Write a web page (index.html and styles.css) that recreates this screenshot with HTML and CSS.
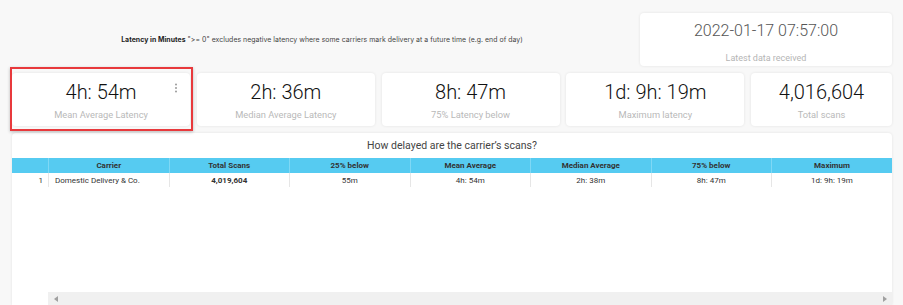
FILE: index.html
```html
<!DOCTYPE html>
<html lang="en">
<head>
    <meta charset="UTF-8">
    <meta name="viewport" content="width=device-width, initial-scale=1.0">
    <title>Carrier Latency</title>
    <link rel="stylesheet" href="styles.css">
</head>
<body>

    <div class="page">
        <!-- Header: note + latest data -->
        <div class="top">
            <p class="note"><b>Latency in Minutes</b> "&gt;= 0" excludes negative latency where some carriers mark delivery at a future time (e.g. end of day)</p>
            <div class="card latest">
                <div class="latest-value">2022-01-17 07:57:00</div>
                <div class="latest-label">Latest data received</div>
            </div>
        </div>

        <!-- KPI cards -->
        <div class="kpis">
            <div class="card kpi selected">
                <div class="kpi-value">4h: 54m</div>
                <div class="kpi-label">Mean Average Latency</div>
                <svg class="menu-dots" width="4" height="10" viewBox="0 0 4 10">
                    <circle cx="2" cy="1.5" r="1" />
                    <circle cx="2" cy="5" r="1" />
                    <circle cx="2" cy="8.5" r="1" />
                </svg>
            </div>
            <div class="card kpi">
                <div class="kpi-value">2h: 36m</div>
                <div class="kpi-label">Median Average Latency</div>
            </div>
            <div class="card kpi">
                <div class="kpi-value">8h: 47m</div>
                <div class="kpi-label">75% Latency below</div>
            </div>
            <div class="card kpi">
                <div class="kpi-value">1d: 9h: 19m</div>
                <div class="kpi-label">Maximum latency</div>
            </div>
            <div class="card kpi kpi-small">
                <div class="kpi-value">4,016,604</div>
                <div class="kpi-label">Total scans</div>
            </div>
        </div>

        <!-- Table -->
        <div class="card table-card">
            <div class="table-title">How delayed are the carrier’s scans?</div>
            <table>
                <thead>
                    <tr>
                        <th class="num"></th>
                        <th>Carrier</th>
                        <th>Total Scans</th>
                        <th>25% below</th>
                        <th>Mean Average</th>
                        <th>Median Average</th>
                        <th>75% below</th>
                        <th>Maximum</th>
                    </tr>
                </thead>
                <tbody>
                    <tr>
                        <td class="num">1</td>
                        <td class="left">Domestic Delivery &amp; Co.</td>
                        <td><b>4,019,604</b></td>
                        <td>55m</td>
                        <td>4h: 54m</td>
                        <td>2h: 38m</td>
                        <td>8h: 47m</td>
                        <td>1d: 9h: 19m</td>
                    </tr>
                </tbody>
            </table>
            <div class="scrollbar">
                <span class="arrow arrow-left"></span>
                <span class="arrow arrow-right"></span>
            </div>
        </div>
    </div>

</body>
</html>
```

FILE: styles.css
```css
body {
    margin: 0;
    background: #f8f8f8;
    font-family: Roboto, "Liberation Sans", Arial, sans-serif;
    color: #333;
    overflow: hidden;
}

.page {
    padding: 13px 11px 0 12px;
    height: 292px;
    display: flex;
    flex-direction: column;
}

.card {
    background: #fff;
    border-radius: 4px;
    box-shadow: 0 0 3px rgba(0, 0, 0, 0.09);
}

/* top row */
.top {
    display: flex;
    align-items: center;
    height: 53px;
}

.note {
    flex: 1;
    margin: 0 8px 0 0;
    text-align: center;
    font-family: Inter, "Open Sans", sans-serif;
    font-size: 6.9px;
    letter-spacing: 0.05px;
    color: #444;
}

.note b {
    color: #222;
}

.latest {
    width: 252px;
    height: 53px;
    display: flex;
    flex-direction: column;
    align-items: center;
}

.latest-value {
    margin-top: 8px;
    font-size: 16px;
    font-weight: 300;
    line-height: 20px;
    color: #555;
}

.latest-label {
    margin-top: 11px;
    font-size: 9px;
    line-height: 12px;
    color: #b5b5b5;
}

/* kpi cards */
.kpis {
    display: flex;
    gap: 6.6px;
    margin-top: 7px;
}

.kpi {
    position: relative;
    flex: 1;
    height: 53px;
    display: flex;
    flex-direction: column;
    align-items: center;
}

.kpi-small {
    flex: 0 0 141px;
}

.kpi-value {
    margin-top: 7px;
    font-size: 20px;
    font-weight: 300;
    line-height: 24px;
    color: #111;
}

.kpi-label {
    margin-top: 5px;
    font-size: 9.3px;
    line-height: 12px;
    color: #b9b9b9;
}

.selected::after {
    content: "";
    position: absolute;
    top: -6px;
    bottom: -5px;
    left: -2px;
    right: -3px;
    border: 2px solid #e8393c;
    box-shadow: 0 1px 3px rgba(0, 0, 0, 0.25);
}

.menu-dots {
    position: absolute;
    top: 10px;
    right: 12px;
    fill: #9a9a9a;
}

/* table card */
.table-card {
    margin-top: 7px;
    flex: 1;
    display: flex;
    flex-direction: column;
    border-radius: 4px 4px 0 0;
}

.table-title {
    text-align: center;
    font-size: 10.5px;
    line-height: 14px;
    color: #444;
    padding-top: 6px;
    height: 19px;
}

table {
    width: 100%;
    border-collapse: collapse;
    table-layout: fixed;
    font-size: 8px;
}

th {
    background: #56cbf1;
    height: 15px;
    padding: 0;
    font-weight: bold;
    color: #333;
    border-left: 1px solid #7fd8f5;
}

th.num {
    width: 36px;
    border-left: none;
}

td {
    height: 14px;
    padding: 0;
    text-align: center;
    border-left: 1px solid #e6e6e6;
}

td.num {
    text-align: right;
    padding-right: 5px;
    border-left: none;
}

td.left {
    text-align: left;
    padding-left: 6px;
}

.scrollbar {
    margin-top: auto;
    margin-left: 36px;
    height: 13px;
    background: #f0f0f0;
    display: flex;
    align-items: center;
    justify-content: space-between;
    padding: 0 5px 0 6px;
}

.arrow {
    width: 0;
    height: 0;
    border-top: 3px solid transparent;
    border-bottom: 3px solid transparent;
}

.arrow-left {
    border-right: 4px solid #a0a0a0;
}

.arrow-right {
    border-left: 4px solid #a0a0a0;
}
```
